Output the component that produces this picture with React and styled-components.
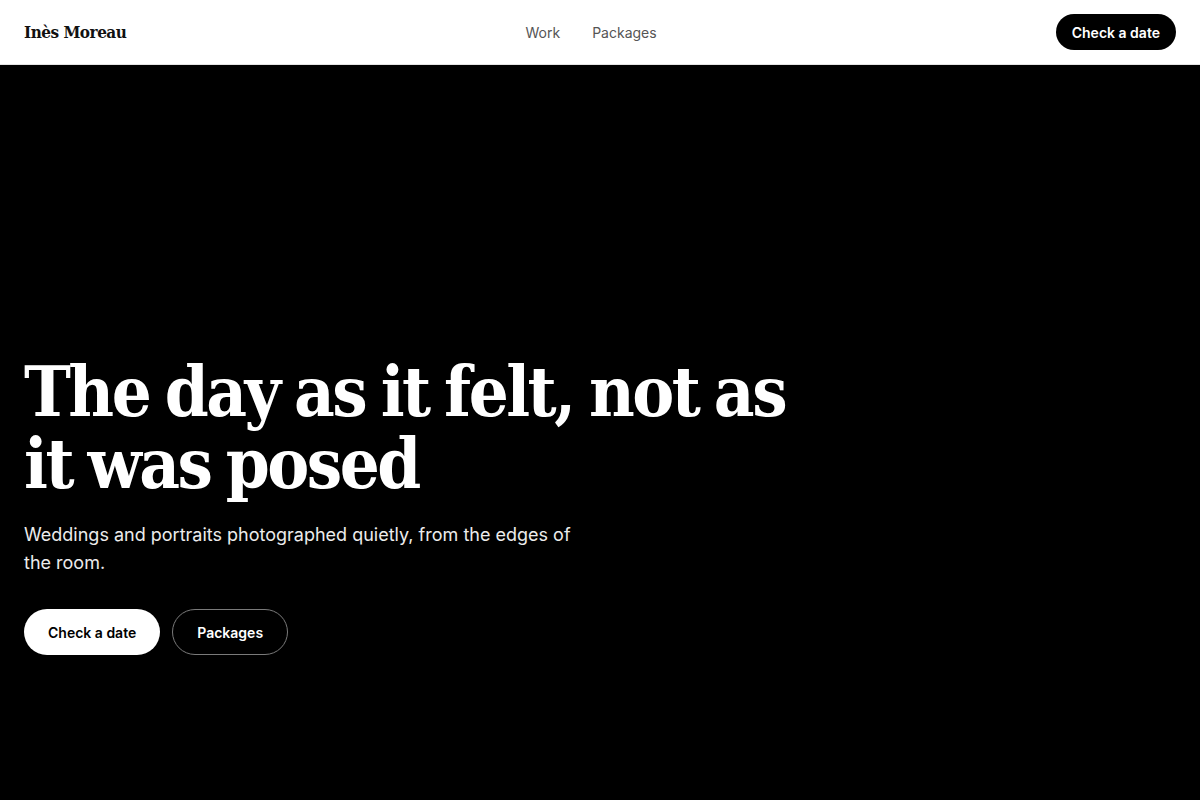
import styled, { createGlobalStyle } from "styled-components";

const GlobalStyle = createGlobalStyle`
  * {
    box-sizing: border-box;
  }
  body {
    margin: 0;
    background: #000;
    font-family: Inter, "Noto Sans", sans-serif;
  }
`;

const Header = styled.header`
  height: 65px;
  padding: 0 24px;
  display: flex;
  align-items: center;
  justify-content: space-between;
  background: #fff;
  border-bottom: 1px solid #e4e4e4;
`;

const Logo = styled.a`
  font-family: "DejaVu Serif", "Liberation Serif", serif;
  font-stretch: condensed;
  font-weight: 700;
  font-size: 17px;
  letter-spacing: -0.5px;
  color: #111;
  text-decoration: none;
`;

const Nav = styled.nav`
  display: flex;
  gap: 32px;
  > a {
    font-size: 14px;
    color: #555;
    text-decoration: none;
  }
`;

const Pill = styled.a`
  display: inline-flex;
  align-items: center;
  justify-content: center;
  height: ${(p) => (p.$small ? "36px" : "46px")};
  padding: 0 ${(p) => (p.$small ? "15px" : p.$variant === "ghost" ? "24px" : "23px")};
  border-radius: 999px;
  font-size: 14px;
  font-weight: 600;
  text-decoration: none;
  background: ${(p) => (p.$variant === "light" ? "#fff" : p.$variant === "ghost" ? "transparent" : "#000")};
  color: ${(p) => (p.$variant === "light" ? "#000" : "#fff")};
  border: 1px solid ${(p) => (p.$variant === "ghost" ? "#7a7a7a" : "transparent")};
`;

const Hero = styled.section`
  height: 735px;
  background: #000;
  color: #fff;
  display: flex;
  flex-direction: column;
  justify-content: flex-end;
  padding: 0 24px 145px;
`;

const Title = styled.h1`
  margin: 0;
  max-width: 800px;
  font-family: "DejaVu Serif", "Liberation Serif", serif;
  font-stretch: condensed;
  font-weight: 700;
  font-size: 70px;
  line-height: 72px;
  letter-spacing: -2.5px;
  word-spacing: -4px;
`;

const Lead = styled.p`
  margin: 21px 0 0;
  max-width: 560px;
  font-size: 18px;
  line-height: 28px;
  color: #ececec;
`;

const Actions = styled.div`
  display: flex;
  gap: 12px;
  margin-top: 32px;
`;

export default function App() {
  return (
    <>
      <GlobalStyle />
      <Header>
        <Logo href="#">Inès Moreau</Logo>
        <Nav>
          <a href="#">Work</a>
          <a href="#">Packages</a>
        </Nav>
        <Pill $small href="#">Check a date</Pill>
      </Header>
      <Hero>
        <Title>The day as it felt, not as it was posed</Title>
        <Lead>Weddings and portraits photographed quietly, from the edges of the room.</Lead>
        <Actions>
          <Pill $variant="light" href="#">Check a date</Pill>
          <Pill $variant="ghost" href="#">Packages</Pill>
        </Actions>
      </Hero>
    </>
  );
}
